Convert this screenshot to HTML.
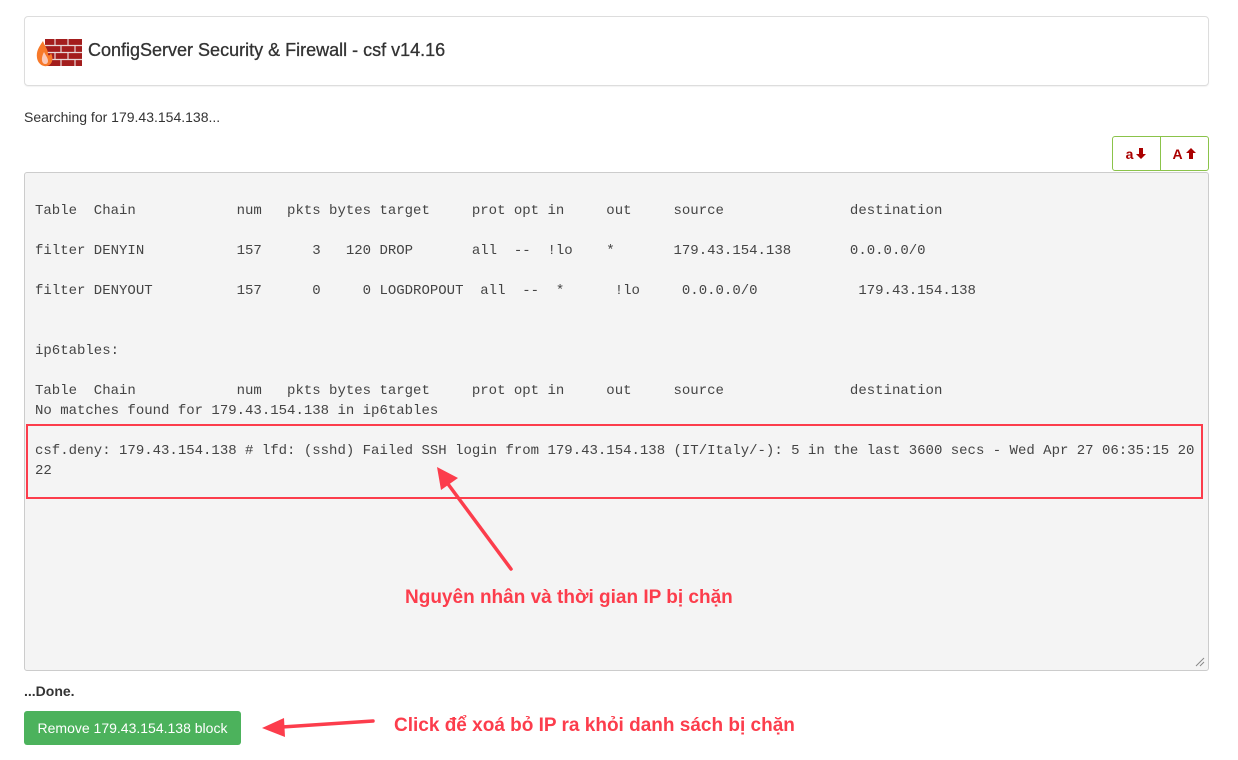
<!DOCTYPE html>
<html><head><meta charset="utf-8"><style>
body{margin:0;background:#fff;width:1238px;height:760px;position:relative;overflow:hidden;font-family:"Liberation Sans",sans-serif;color:#333}
.hdr{position:absolute;left:24px;top:16px;width:1183px;height:68px;border:1px solid #ddd;border-radius:4px;box-shadow:0 1px 1px rgba(0,0,0,.05)}
.hdr .t{position:absolute;left:63px;top:23px;font-size:18px;color:#333;-webkit-text-stroke:0.3px #333}
.s{position:absolute;left:24px;top:109px;font-size:14px}
.btns{position:absolute;left:1112px;top:136px;width:95px;height:33px;border:1px solid #8bc34a;border-radius:3px;display:flex}
.btns div{flex:1;display:flex;align-items:center;justify-content:center;color:#a00;font-weight:bold;font-size:14px}
.btns div:first-child{border-right:1px solid #8bc34a}
.ta{position:absolute;left:24px;top:172px;width:1183px;height:497px;background:#f4f4f4;border:1px solid #ccc;border-radius:3px}
pre{position:absolute;left:35px;top:201px;margin:0;font-family:"Liberation Mono",monospace;font-size:14px;line-height:20px;color:#444}
.rb{position:absolute;left:26px;top:424px;width:1173px;height:71px;border:2px solid #fc3d4c}
.ann{position:absolute;font-weight:bold;font-size:19px;color:#fc3d4c}
.done{position:absolute;left:24px;top:683px;font-size:14px;font-weight:bold}
.gb{position:absolute;left:24px;top:711px;width:217px;height:34px;background:#4cb25c;border-radius:3px;color:#fff;font-size:14px;display:flex;align-items:center;justify-content:center}
</style></head><body>
<div class="hdr">
<svg style="position:absolute;left:10px;top:20px" width="48" height="30" viewBox="0 0 48 30">
<rect x="10" y="2" width="37" height="27" fill="#a31d1d"/>
<g stroke="#e8d8d8" stroke-width="1.2"><line x1="10" y1="8.5" x2="47" y2="8.5"/><line x1="10" y1="15.5" x2="47" y2="15.5"/><line x1="10" y1="22.5" x2="47" y2="22.5"/>
<line x1="20" y1="2" x2="20" y2="8.5"/><line x1="33" y1="2" x2="33" y2="8.5"/><line x1="26" y1="8.5" x2="26" y2="15.5"/><line x1="40" y1="8.5" x2="40" y2="15.5"/><line x1="20" y1="15.5" x2="20" y2="22.5"/><line x1="33" y1="15.5" x2="33" y2="22.5"/><line x1="26" y1="22.5" x2="26" y2="29"/><line x1="40" y1="22.5" x2="40" y2="29"/></g>
<path d="M8 4 C4 10 1 14 2 21 C3 27 8 30 12 29 C17 28 19 22 16 16 C15 19 13 19 13 17 C13 12 10 10 8 4Z" fill="#f7792a"/>
<path d="M9 15 C7 19 6 23 8 26 C10 28 13 27 13 24 C13 21 11 19 9 15Z" fill="#fbc8b8"/>
</svg>
<div class="t">ConfigServer Security &amp; Firewall - csf v14.16</div></div>
<div class="s">Searching for 179.43.154.138...</div>
<div class="btns"><div>a<svg width="12" height="13" viewBox="0 0 12 13" style="margin-left:2px"><path d="M4 1h4v6h3l-5 5-5-5h3z" fill="#a00"/></svg></div><div>A<svg width="12" height="13" viewBox="0 0 12 13" style="margin-left:2px"><path d="M4 12h4V6h3L6 1 1 6h3z" fill="#a00"/></svg></div></div>
<div class="ta"><svg style="position:absolute;right:3px;bottom:3px" width="10" height="10"><path d="M1 9L9 1M5 9L9 5" stroke="#888"/></svg></div>
<pre>Table  Chain            num   pkts bytes target     prot opt in     out     source               destination

filter DENYIN           157      3   120 DROP       all  --  !lo    *       179.43.154.138       0.0.0.0/0

filter DENYOUT          157      0     0 LOGDROPOUT  all  --  *      !lo     0.0.0.0/0            179.43.154.138


ip6tables:

Table  Chain            num   pkts bytes target     prot opt in     out     source               destination
No matches found for 179.43.154.138 in ip6tables

csf.deny: 179.43.154.138 # lfd: (sshd) Failed SSH login from 179.43.154.138 (IT/Italy/-): 5 in the last 3600 secs - Wed Apr 27 06:35:15 20
22</pre>
<div class="rb"></div>
<svg style="position:absolute;left:0;top:0" width="1238" height="760">
<path d="M511 569 L448 484" stroke="#fc3d4c" stroke-width="3.5" stroke-linecap="round"/>
<path d="M437 467 L458 478 L441 490Z" fill="#fc3d4c"/>
<path d="M373 721 L282 727" stroke="#fc3d4c" stroke-width="3.5" stroke-linecap="round"/>
<path d="M262 728 L284 718 L285 737Z" fill="#fc3d4c"/>
</svg>
<div class="ann" style="left:405px;top:587px">Nguyên nhân và thời gian IP bị chặn</div>
<div class="ann" style="left:394px;top:715px">Click để xoá bỏ IP ra khỏi danh sách bị chặn</div>
<div class="done">...Done.</div>
<div class="gb">Remove 179.43.154.138 block</div>
</body></html>
